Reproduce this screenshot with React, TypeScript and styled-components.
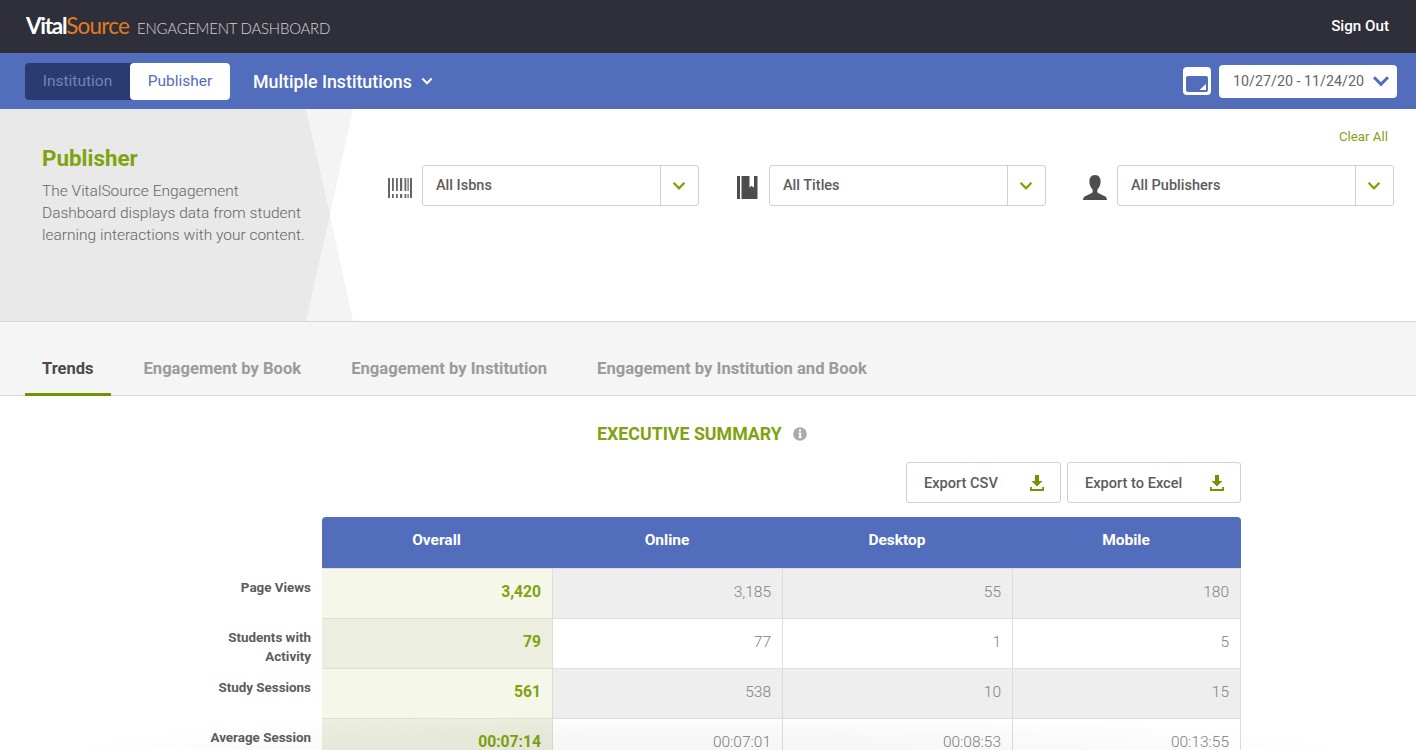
import React from 'react';
import styled, { createGlobalStyle } from 'styled-components';

const blue = '#526dbc';
const green = '#7fa30f';
const greenDark = '#6f9500';

const rows = [
  { label: 'Page Views', values: ['3,420', '3,185', '55', '180'] },
  { label: 'Students with Activity', values: ['79', '77', '1', '5'] },
  { label: 'Study Sessions', values: ['561', '538', '10', '15'] },
  { label: 'Average Session', values: ['00:07:14', '00:07:01', '00:08:53', '00:13:55'] },
];

function Chevron({ color, size = 14 }: { color: string; size?: number }) {
  return (
    <svg width={size} height={size * 0.7} viewBox='0 0 14 10' fill='none'>
      <path d='M1.500 1.800 7 7.400l5.500-5.600' stroke={color} strokeWidth='2.400' />
    </svg>
  );
}

function BarcodeIcon() {
  return (
    <svg width='24' height='20' viewBox='0 0 24 20' fill='#666'>
      <path d='M0 0h2v20H0zM22 0h2v20h-2z' />
      <path d='M4 0h1.800v13H4zM8 0h1.800v13H8zM12 0h2.200v13H12zM16.500 0h1.800v13h-1.800zM19.500 0h1.200v13h-1.200z' />
      <path d='M4 16h1.800v4H4zM8 16h1.800v4H8zM12 16h2.200v4H12zM16.500 16h1.800v4h-1.800zM19.500 16h1.200v4h-1.200z' />
    </svg>
  );
}

function BookIcon() {
  return (
    <svg width='21' height='23' viewBox='0 0 21 23' fill='#4d4d4d'>
      <path d='M0 0h3v23H0z' />
      <path d='M4.500 0h8v11.500l2-1.800 2.500 2V0h3.500v23H4.500z' />
    </svg>
  );
}

function PersonIcon() {
  return (
    <svg width='24' height='25' viewBox='0 0 24 25' fill='#4d4d4d'>
      <path d='M12 0c3.800 0 5.600 2.900 5.600 6.400 0 3.300-1.400 6.200-2.900 7.800-.6.700-.6 2.900.1 3.500 1.700 1.500 6.800 2.800 8.200 4.300.7.800 1 2 1 3H0c0-1 .3-2.200 1-3 1.400-1.500 6.500-2.800 8.200-4.300.7-.6.700-2.800.1-3.500C7.800 12.600 6.400 9.700 6.400 6.400 6.400 2.900 8.200 0 12 0z' />
    </svg>
  );
}

function DownloadIcon() {
  return (
    <svg width='14' height='16' viewBox='0 0 14 16' fill={greenDark}>
      <path d='M5 0h4v6h3.500L7 11.500 1.500 6H5z' />
      <path d='M0 12h1.800v2h10.400v-2H14v4H0z' />
    </svg>
  );
}

function InfoIcon() {
  return (
    <svg width='14' height='14' viewBox='0 0 15 15'>
      <circle cx='7.500' cy='7.500' r='7.300' fill='#aaa' />
      <path d='M6.300 2.800h2.400v2H6.300zM5.800 6h2.900v4.600h.8v1.300H5.700v-1.300h.9V7.300h-.8z' fill='#fff' />
    </svg>
  );
}

function CalendarIcon() {
  return (
    <svg width='28' height='28' viewBox='0 0 28 28'>
      <rect width='28' height='28' rx='4' fill='#fff' />
      <rect x='3' y='9' width='22' height='16' rx='2' fill={blue} />
      <path d='M23 23h-6.500l6.500-6z' fill='#fff' />
    </svg>
  );
}

const filters = [
  { icon: <BarcodeIcon />, text: 'All Isbns' },
  { icon: <BookIcon />, text: 'All Titles' },
  { icon: <PersonIcon />, text: 'All Publishers' },
];

const tabs = ['Trends', 'Engagement by Book', 'Engagement by Institution', 'Engagement by Institution and Book'];

export default function App() {
  return (
    <Page>
      <GlobalStyle />
      <TopBar>
        <Logo>
          <LogoVital>Vital</LogoVital>
          <LogoSource>Source</LogoSource>
          <LogoTitle>ENGAGEMENT DASHBOARD</LogoTitle>
        </Logo>
        <SignOut>Sign Out</SignOut>
      </TopBar>

      <NavBar>
        <Segment>
          <SegmentItem>Institution</SegmentItem>
          <SegmentItem $active>Publisher</SegmentItem>
        </Segment>
        <InstitutionPicker>
          Multiple Institutions
          <Chevron color='#fff' size={12} />
        </InstitutionPicker>
        <DateArea>
          <CalendarIcon />
          <DateBox>
            10/27/20 - 11/24/20
            <Chevron color={blue} size={18} />
          </DateBox>
        </DateArea>
      </NavBar>

      <Hero>
        <Intro>
          <IntroTitle>Publisher</IntroTitle>
          <IntroText>
            The VitalSource Engagement
            <br />
            Dashboard displays data from student
            <br />
            learning interactions with your content.
          </IntroText>
        </Intro>
        <FilterArea>
          <ClearAll>Clear All</ClearAll>
          <FilterRow>
            {filters.map((f) => (
              <Filter key={f.text}>
                <FilterIcon>{f.icon}</FilterIcon>
                <Select>
                  <SelectText>{f.text}</SelectText>
                  <SelectArrow>
                    <Chevron color={green} />
                  </SelectArrow>
                </Select>
              </Filter>
            ))}
          </FilterRow>
        </FilterArea>
      </Hero>

      <TabBar>
        {tabs.map((t, i) => (
          <Tab key={t} $active={i === 0}>
            {t}
          </Tab>
        ))}
      </TabBar>

      <Content>
        <SummaryTitle>
          EXECUTIVE SUMMARY
          <InfoIcon />
        </SummaryTitle>
        <ExportRow>
          <ExportButton $width={155}>
            Export CSV
            <DownloadIcon />
          </ExportButton>
          <ExportButton $width={174}>
            Export to Excel
            <DownloadIcon />
          </ExportButton>
        </ExportRow>
        <HeaderRow>
          <span />
          <HeaderCells>
            <HeaderCell>Overall</HeaderCell>
            <HeaderCell>Online</HeaderCell>
            <HeaderCell>Desktop</HeaderCell>
            <HeaderCell>Mobile</HeaderCell>
          </HeaderCells>
        </HeaderRow>
        {rows.map((row, r) => (
          <Row key={row.label}>
            <RowLabel>{row.label}</RowLabel>
            {row.values.map((v, c) => (
              <Cell key={c} $overall={c === 0} $odd={r % 2 === 0}>
                {v}
              </Cell>
            ))}
          </Row>
        ))}
      </Content>
      <BottomFade />
    </Page>
  );
}

const GlobalStyle = createGlobalStyle`
  html, body {
    margin: 0;
    height: 100%;
    overflow: hidden;
    background: #fff;
    font-family: Roboto, "Liberation Sans", sans-serif;
  }
`;

const Page = styled.div`
  position: relative;
  width: 1416px;
  height: 750px;
  overflow: hidden;
`;

const TopBar = styled.header`
  display: flex;
  justify-content: space-between;
  align-items: center;
  height: 53px;
  padding: 0 27px 0 26px;
  box-sizing: border-box;
  background: #2f2f3a;
`;

const Logo = styled.div`
  display: flex;
  align-items: baseline;
  padding-bottom: 3px;
  font-family: Lato, sans-serif;
`;

const LogoVital = styled.span`
  color: #fff;
  font-size: 22.500px;
  font-weight: 700;
  letter-spacing: -1.300px;
`;

const LogoSource = styled.span`
  color: #e07b26;
  font-size: 22.500px;
  font-weight: 400;
  letter-spacing: -0.800px;
`;

const LogoTitle = styled.span`
  margin-left: 8px;
  color: #d4d4d6;
  font-size: 15px;
  font-weight: 300;
  letter-spacing: -0.250px;
`;

const SignOut = styled.div`
  padding-bottom: 1px;
  color: #fff;
  font-size: 15.200px;
  font-weight: 500;
`;

const NavBar = styled.nav`
  display: flex;
  align-items: center;
  height: 56px;
  padding: 0 19px 0 25px;
  box-sizing: border-box;
  background: ${blue};
`;

const Segment = styled.div`
  display: flex;
  height: 37px;
  border-radius: 4px;
  background: #2a3b72;
`;

const SegmentItem = styled.div<{ $active?: boolean }>`
  display: flex;
  align-items: center;
  justify-content: center;
  width: ${(p) => (p.$active ? '100px' : '105px')};
  border-radius: 4px;
  font-size: 15.500px;
  color: ${(p) => (p.$active ? blue : '#7184bd')};
  background: ${(p) => (p.$active ? '#fff' : 'transparent')};
`;

const InstitutionPicker = styled.div`
  display: flex;
  align-items: center;
  gap: 9px;
  margin-left: 23px;
  color: #fff;
  font-size: 17.800px;
  font-weight: 500;
`;

const DateArea = styled.div`
  display: flex;
  align-items: center;
  gap: 8px;
  margin-left: auto;
`;

const DateBox = styled.div`
  display: flex;
  align-items: center;
  justify-content: space-between;
  width: 178px;
  height: 33px;
  padding: 0 7px 0 14px;
  box-sizing: border-box;
  border-radius: 4px;
  background: #fff;
  color: #666;
  font-size: 14.300px;
  font-weight: 400;
`;

const Hero = styled.section`
  display: flex;
  height: 213px;
  border-bottom: 1px solid #d5d5d5;
  box-sizing: border-box;
`;

const Intro = styled.div`
  position: relative;
  flex: none;
  width: 354px;
  height: 212px;
  padding: 36px 0 0 42px;
  box-sizing: border-box;
  background: #f4f4f4;
  clip-path: polygon(0 0, 353px 0, 330px 106px, 353px 212px, 0 212px);

  &::before {
    content: '';
    position: absolute;
    inset: 0;
    background: #e9e9e9;
    clip-path: polygon(0 0, 306px 0, 330px 106px, 306px 212px, 0 212px);
  }
`;

const IntroTitle = styled.h1`
  position: relative;
  margin: 0;
  color: ${green};
  font-size: 22.400px;
  font-weight: 700;
  line-height: 26px;
`;

const IntroText = styled.p`
  position: relative;
  margin: 9px 0 0;
  color: #666;
  font-size: 15.500px;
  font-weight: 300;
  line-height: 22px;
  white-space: nowrap;
`;

const FilterArea = styled.div`
  flex: 1;
  padding: 20px 22px 0 34px;
`;

const ClearAll = styled.div`
  padding-right: 6px;
  text-align: right;
  color: ${green};
  font-size: 13.300px;
  line-height: 15px;
`;

const FilterRow = styled.div`
  display: grid;
  grid-template-columns: 347px 348px 311px;
  margin-top: 21px;
`;

const Filter = styled.div`
  display: flex;
  align-items: center;
`;

const FilterIcon = styled.div`
  display: flex;
  justify-content: center;
  width: 24px;
  margin-right: 10px;
  padding-top: 4px;
`;

const Select = styled.div`
  display: flex;
  width: 277px;
  height: 41px;
  box-sizing: border-box;
  border: 1px solid #d0d0d0;
  border-radius: 3px;
`;

const SelectText = styled.div`
  display: flex;
  flex: 1;
  align-items: center;
  padding-left: 13px;
  color: #5c5c5c;
  font-size: 14.500px;
  font-weight: 500;
`;

const SelectArrow = styled.div`
  display: flex;
  align-items: center;
  justify-content: center;
  width: 38px;
  padding-right: 2px;
  box-sizing: border-box;
  border-left: 1px solid #d0d0d0;
`;

const TabBar = styled.div`
  display: flex;
  gap: 16px;
  height: 74px;
  padding: 0 25px;
  box-sizing: border-box;
  border-bottom: 1px solid #d8d8d8;
  background: #f5f5f5;
`;

const Tab = styled.div<{ $active?: boolean }>`
  display: flex;
  align-items: center;
  height: 74px;
  padding: 21px 17px 0;
  box-sizing: border-box;
  border-bottom: 3px solid ${(p) => (p.$active ? greenDark : 'transparent')};
  color: ${(p) => (p.$active ? '#4a4a4a' : '#9b9b9b')};
  font-size: ${(p) => (p.$active ? '16.500px' : '16.600px')};
  font-weight: 700;
`;

const Content = styled.main`
  width: 1241px;
  padding-top: 25px;
`;

const SummaryTitle = styled.h2`
  display: flex;
  align-items: center;
  gap: 11px;
  margin: 0 0 0 597px;
  color: ${green};
  font-size: 17.800px;
  font-weight: 700;
  line-height: 26px;
`;

const ExportRow = styled.div`
  display: flex;
  justify-content: flex-end;
  gap: 6px;
  margin-top: 15px;
`;

const ExportButton = styled.div<{ $width: number }>`
  display: flex;
  align-items: center;
  justify-content: space-between;
  width: ${(p) => p.$width}px;
  height: 41px;
  padding: 0 16px 0 17px;
  box-sizing: border-box;
  border: 1px solid #d0d0d0;
  border-radius: 3px;
  color: #5c5c5c;
  font-size: 14.600px;
  font-weight: 500;
`;

const HeaderRow = styled.div`
  display: grid;
  grid-template-columns: 322px 1fr;
  margin-top: 14px;
`;

const HeaderCells = styled.div`
  display: grid;
  grid-template-columns: 231px 230px 230px 228px;
  height: 51px;
  border-radius: 4px 4px 0 0;
  background: ${blue};
`;

const HeaderCell = styled.div`
  display: flex;
  align-items: center;
  justify-content: center;
  padding: 0 2px 6px 0;
  color: #fff;
  font-size: 15.500px;
  font-weight: 700;
`;

const Row = styled.div`
  display: grid;
  grid-template-columns: 322px 231px 230px 230px 228px;
  height: 50px;
`;

const RowLabel = styled.div`
  width: 311px;
  box-sizing: border-box;
  padding: 10px 0 0 200px;
  text-align: right;
  color: #5c5c5c;
  font-size: 13.400px;
  font-weight: 700;
  line-height: 19px;
`;

const Cell = styled.div<{ $overall: boolean; $odd: boolean }>`
  display: flex;
  align-items: center;
  justify-content: flex-end;
  padding: 0 11px 4px 0;
  box-sizing: border-box;
  border-right: 1px solid #dcdcdc;
  border-top: 1px solid #dedede;
  font-size: ${(p) => (p.$overall ? '15.700px' : '15.500px')};
  color: ${(p) => (p.$overall ? green : '#808080')};
  font-weight: ${(p) => (p.$overall ? 700 : 300)};
  background: ${(p) =>
    p.$overall ? (p.$odd ? '#f5f8e8' : '#ecefdf') : p.$odd ? '#eeeeee' : '#fff'};
`;

const BottomFade = styled.div`
  position: absolute;
  left: 0;
  right: 0;
  bottom: 0;
  height: 36px;
  background: radial-gradient(
    ellipse 46% 100% at 50% 100%,
    rgba(0, 0, 0, 0.04) 0%,
    rgba(0, 0, 0, 0.025) 55%,
    rgba(0, 0, 0, 0) 100%
  );
  pointer-events: none;
`;
